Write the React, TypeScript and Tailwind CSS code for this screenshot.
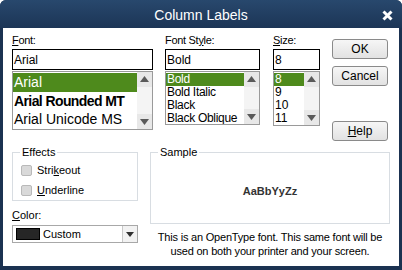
import React from "react";

const ui = "font-['Liberation_Sans',Arial,sans-serif]";

function Arrow({ down }: { down?: boolean }) {
  return (
    <div className="h-[15px] flex items-center justify-center bg-[#e8e8e8]">
      <svg width="9" height="7" viewBox="0 0 9 7">
        <path d={down ? "M0 1 L9 1 L4.5 7 Z" : "M4.5 0 L9 6 L0 6 Z"} fill="#5a5a5a" />
      </svg>
    </div>
  );
}

function ScrollBar() {
  return (
    <div className="w-[15px] shrink-0 flex flex-col bg-[#f4f4f4]">
      <Arrow />
      <div className="flex-1" />
      <Arrow down />
    </div>
  );
}

function ListBox({
  items,
  height,
  rowClass,
  itemClass,
}: {
  items: string[];
  height: string;
  rowClass: string;
  itemClass?: (i: number) => string;
}) {
  return (
    <div className={`mt-[1px] flex border border-[#9a9a9a] ${height}`}>
      <div className="flex-1 overflow-hidden pt-[1px]">
        {items.map((t, i) => (
          <div
            key={t}
            className={`${rowClass} whitespace-nowrap overflow-hidden pl-[1px] ${
              i === 0 ? "bg-[#4e8a1c] text-white" : "text-black"
            } ${itemClass ? itemClass(i) : ""}`}
          >
            {t}
          </div>
        ))}
      </div>
      <ScrollBar />
    </div>
  );
}

function Label({ children }: { children: React.ReactNode }) {
  return (
    <div className="mt-[5px] h-[14px] leading-[14px] text-[11px] tracking-[-0.3px] text-black">{children}</div>
  );
}

function Input({ value }: { value: string }) {
  return (
    <div className="mt-[2px] h-[21px] border border-black pl-[1px] flex items-center text-[12px] text-black">
      {value}
    </div>
  );
}

function Button({ children, className }: { children: React.ReactNode; className?: string }) {
  return (
    <div
      className={`h-[20px] rounded-[3px] border border-[#8a8a8a] bg-gradient-to-b from-[#f6f6f6] to-[#e2e2e2] flex items-center justify-center text-[12px] text-black ${className ?? ""}`}
    >
      {children}
    </div>
  );
}

function CheckRow({ children }: { children: React.ReactNode }) {
  return (
    <div className="flex items-center h-[20px] pl-[8px]">
      <div className="w-[11px] h-[11px] rounded-[2px] border border-[#b9b9b9] bg-[#d9d9d9]" />
      <span className="ml-[5px] text-[11px] text-black">{children}</span>
    </div>
  );
}

export default function App() {
  return (
    <div className={`w-[402px] h-[270px] bg-[#1b3251] rounded-t-[6px] flex flex-col ${ui}`}>
      <div className="h-[28px] shrink-0 rounded-t-[6px] bg-gradient-to-b from-[#28486d] to-[#1c3556] flex items-center relative">
        <div className="flex-1 text-center text-white text-[14px] pt-[2px]">Column Labels</div>
        <svg className="absolute left-[382px] top-[10px]" width="11" height="11" viewBox="0 0 11 11">
          <path d="M1.5 1.5 L9.5 9.5 M9.5 1.5 L1.5 9.5" stroke="#ffffff" strokeWidth="3" />
        </svg>
      </div>

      <div className="flex-1 mx-[3px] mb-[4px] bg-white pl-[9px] pr-[9px] flex flex-col">
        <div className="flex">
          <div className="w-[141px]">
            <Label>
              <span className="underline">F</span>ont:
            </Label>
            <Input value="Arial" />
            <ListBox
              items={["Arial", "Arial Rounded MT", "Arial Unicode MS"]}
              height="h-[59px]"
              rowClass="h-[18.5px] leading-[18px] text-[14px]"
              itemClass={(i) => (i === 1 ? "font-bold tracking-[-0.6px]" : "")}
            />
          </div>

          <div className="w-[95px] ml-[12px]">
            <Label>
              Font St<span className="underline">y</span>le:
            </Label>
            <Input value="Bold" />
            <ListBox
              items={["Bold", "Bold Italic", "Black", "Black Oblique"]}
              height="h-[54px]"
              rowClass="h-[13px] leading-[13px] text-[12px] tracking-[-0.3px]"
            />
          </div>

          <div className="w-[47px] ml-[13px]">
            <Label>
              <span className="underline">S</span>ize:
            </Label>
            <Input value="8" />
            <ListBox items={["8", "9", "10", "11"]} height="h-[55px]" rowClass="h-[13px] leading-[13px] text-[12px]" />
          </div>

          <div className="w-[56px] ml-[12px] mr-[2px] flex flex-col">
            <Button className="mt-[11px]">OK</Button>
            <Button className="mt-[7px]">Cancel</Button>
            <Button className="mt-[35px]">
              <span className="underline">H</span>elp
            </Button>
          </div>
        </div>

        <div className="flex mt-[4px]">
          <div className="w-[126px]">
            <fieldset className="h-[56px] border border-[#d8dde2]">
              <legend className="ml-[7px] px-[2px] h-[14px] leading-[14px] text-[11px] text-black">Effects</legend>
              <div className="pt-[1px]">
                <CheckRow>
                  Stri<span className="underline">k</span>eout
                </CheckRow>
                <CheckRow>
                  <span className="underline">U</span>nderline
                </CheckRow>
              </div>
            </fieldset>
            <div className="mt-[7px] h-[14px] leading-[14px] text-[11px] text-black">
              <span className="underline">C</span>olor:
            </div>
            <div className="mt-[3px] h-[18px] flex border border-[#a8a8a8]">
              <div className="flex-1 flex items-center pl-[3px]">
                <div className="w-[24px] h-[12px] bg-[#262626] border border-black" />
                <span className="ml-[3px] text-[11px] text-black">Custom</span>
              </div>
              <div className="w-[15px] border-l border-[#c8c8c8] bg-[#f2f2f2] flex items-center justify-center">
                <svg width="8" height="5" viewBox="0 0 8 5">
                  <path d="M0 0 L8 0 L4 5 Z" fill="#303030" />
                </svg>
              </div>
            </div>
          </div>

          <div className="w-[240px] ml-[12px] mr-[-2px]">
            <fieldset className="h-[79px] border border-[#d8dde2] flex flex-col">
              <legend className="ml-[7px] px-[2px] h-[14px] leading-[14px] text-[11px] text-black">Sample</legend>
              <div className="h-[64px] flex items-center justify-center text-[11px] font-bold text-[#333333]">
                AaBbYyZz
              </div>
            </fieldset>
            <p className="mt-[6px] text-center text-[11px] tracking-[-0.2px] leading-[14px] text-black whitespace-nowrap">
              This is an OpenType font. This same font will be
              <br />
              used on both your printer and your screen.
            </p>
          </div>
        </div>
      </div>
    </div>
  );
}
